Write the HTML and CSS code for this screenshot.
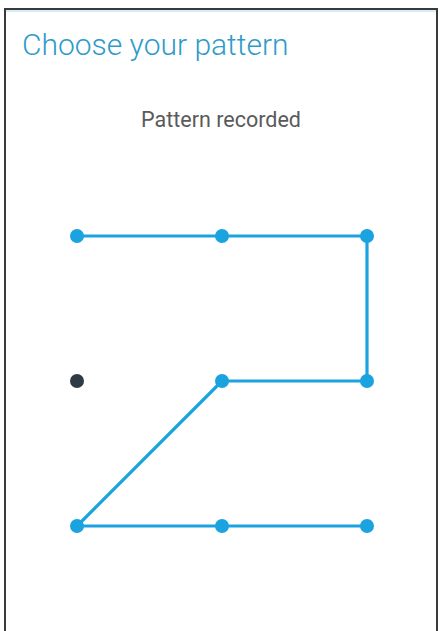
FILE: index.html
```html
<!DOCTYPE html>
<html>
<head>
<meta charset="utf-8">
<link rel="stylesheet" href="styles.css">
</head>
<body>
<div class="frame">
  <div class="inner">
    <h1 class="title">Choose your pattern</h1>
    <p class="status">Pattern recorded</p>
    <svg class="pattern" width="432" height="420" viewBox="0 0 432 420">
      <polyline points="71,103 216,103 361,103 361,248 216,248 71,393 216,393 361,393" fill="none" stroke="#1ba3e0" stroke-width="3.2" stroke-linejoin="round"/>
      <g fill="#1ba3e0">
        <circle cx="71" cy="103" r="7"/>
        <circle cx="216" cy="103" r="7"/>
        <circle cx="361" cy="103" r="7"/>
        <circle cx="216" cy="248" r="7"/>
        <circle cx="361" cy="248" r="7"/>
        <circle cx="71" cy="393" r="7"/>
        <circle cx="216" cy="393" r="7"/>
        <circle cx="361" cy="393" r="7"/>
      </g>
      <circle cx="71" cy="248" r="7" fill="#2e3a46"/>
    </svg>
  </div>
</div>
</body>
</html>
```

FILE: styles.css
```css
html, body {
  margin: 0;
  padding: 0;
  background: #ffffff;
}
body {
  width: 440px;
  height: 631px;
  overflow: hidden;
  font-family: Roboto, "Noto Sans", sans-serif;
}
.frame {
  margin: 8px 0 0 4px;
  width: 430px;
  height: 640px;
  border: 2px solid #3a3a3a;
  border-bottom: none;
}
.inner {
  border-top: 2px solid #d6eef7;
  display: flex;
  flex-direction: column;
}
.title {
  margin: 16px 0 0 16px;
  font-size: 30px;
  font-weight: 300;
  line-height: 34px;
  color: #2f9bc8;
}
.status {
  margin: 45px 0 0 0;
  text-align: center;
  font-size: 21.5px;
  line-height: 26px;
  color: #5a5a5a;
  font-weight: 400;
}
.pattern {
  display: block;
  margin-top: 0;
}
```
